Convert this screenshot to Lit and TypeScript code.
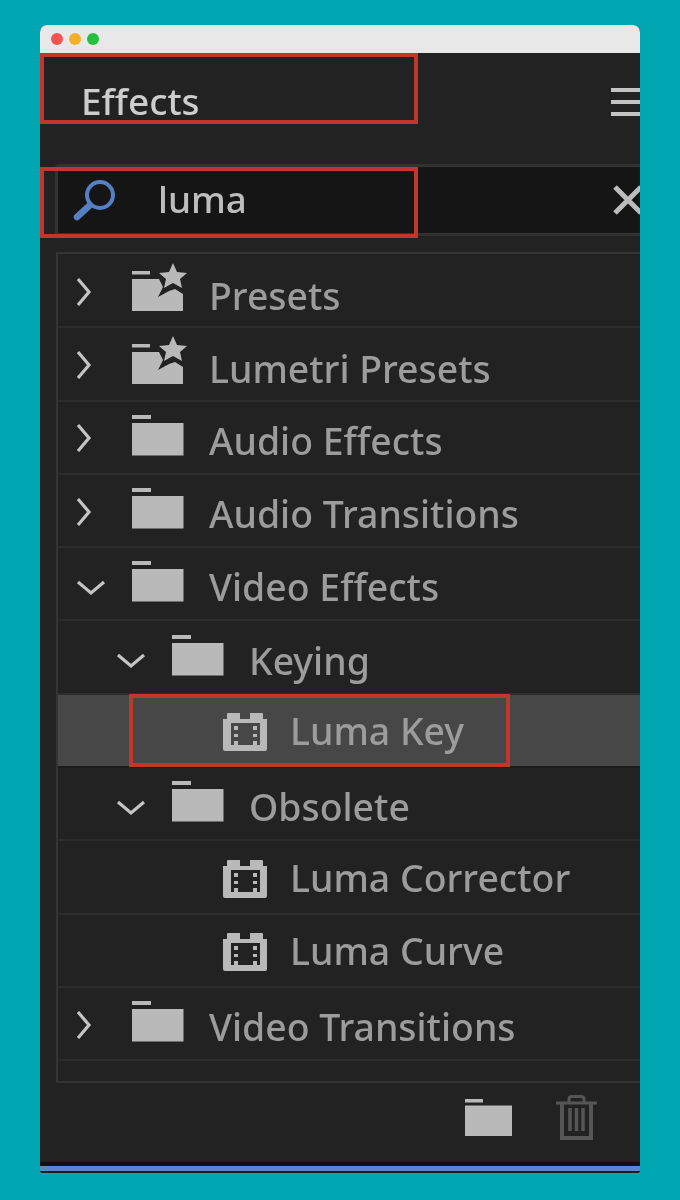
import { LitElement, css, html } from "lit";
import { customElement } from "lit/decorators.js";

type Kind = "folder" | "star" | "effect";
interface Row {
  label: string;
  depth: number;
  kind: Kind;
  open?: boolean;
  selected?: boolean;
}

const ROWS: Row[] = [
  { label: "Presets", depth: 0, kind: "star" },
  { label: "Lumetri Presets", depth: 0, kind: "star" },
  { label: "Audio Effects", depth: 0, kind: "folder" },
  { label: "Audio Transitions", depth: 0, kind: "folder" },
  { label: "Video Effects", depth: 0, kind: "folder", open: true },
  { label: "Keying", depth: 1, kind: "folder", open: true },
  { label: "Luma Key", depth: 2, kind: "effect", selected: true },
  { label: "Obsolete", depth: 1, kind: "folder", open: true },
  { label: "Luma Corrector", depth: 2, kind: "effect" },
  { label: "Luma Curve", depth: 2, kind: "effect" },
  { label: "Video Transitions", depth: 0, kind: "folder" },
];

const folderIcon = html`<svg class="folder plain" width="52" height="41" viewBox="0 0 52 41">
  <path d="M0 0h19v4H0zM0 8h51.500v32.500H0z" fill="#b9b9b9" />
</svg>`;

const starIcon = html`<svg class="folder star" width="56" height="48" viewBox="0 0 56 48">
  <path d="M0 8h18v3.500H0zM0 16h27l4 8-5 10 11-6 6-2 8 5v17H0z" fill="#b9b9b9" />
  <path d="M41 0l4 9 10 1-7 6 2 9-9-5-9 5 2-9-7-6 10-1z" fill="#b9b9b9" />
</svg>`;

const effectIcon = html`<svg class="effect" width="45" height="39" viewBox="0 0 45 39">
  <path
    fill="#b9b9b9"
    fill-rule="evenodd"
    d="M4 1q0-1 1-1h12v6h10V0h12q1 0 1 1v5h4v30q0 2-2 2H2q-2 0-2-2V6h4zM8 10v22h29V10z"
  />
  <path fill="#b9b9b9" d="M11 13h4v4h-4zM11 21h4v3h-4zM11 28h4v4h-4zM30 13h4v4h-4zM30 21h4v3h-4zM30 28h4v4h-4z" />
</svg>`;

@customElement("app-root")
export class AppRoot extends LitElement {
  static styles = css`
    :host {
      display: block;
      height: 1200px;
      box-sizing: border-box;
      padding: 25px 40px 0;
      background: #00a6b1;
      font-family: "Noto Sans", "Open Sans", sans-serif;
      font-weight: 500;
    }

    .window {
      height: 1148px;
      display: flex;
      flex-direction: column;
      overflow: hidden;
      border-radius: 7px 7px 3px 3px;
      background: #222222;
      filter: blur(0.5px);
    }

    .titlebar {
      flex: none;
      height: 28px;
      display: flex;
      align-items: center;
      gap: 6px;
      padding-left: 11px;
      background: #e8e8e8;
    }

    .dot {
      width: 12px;
      height: 12px;
      border-radius: 50%;
    }

    .header {
      flex: none;
      position: relative;
      height: 111px;
      box-sizing: border-box;
      display: flex;
      justify-content: space-between;
      padding: 23px 0 0 41px;
      color: #cdcdcd;
      font-size: 37px;
      line-height: 50px;
    }

    .menu {
      width: 29px;
      height: 28px;
      margin-top: 12px;
      display: flex;
      flex-direction: column;
      justify-content: space-between;
    }

    .menu i {
      height: 4px;
      background: #c4c4c4;
    }

    .redbox {
      position: absolute;
      box-sizing: border-box;
      border: 4px solid #c2362b;
      pointer-events: none;
    }

    .header .redbox {
      left: 0;
      top: 0;
      width: 378px;
      height: 71px;
    }

    .search {
      flex: none;
      position: relative;
      height: 72px;
      margin-left: 15px;
      box-sizing: border-box;
      display: flex;
      align-items: center;
      border-top: 3px solid #323232;
      border-bottom: 3px solid #323232;
      border-left: 3px solid #323232;
      border-radius: 4px 0 0 4px;
      background: #151515;
      color: #bdbdbd;
      font-size: 36.8px;
    }

    .search .glass {
      margin-left: 14px;
    }

    .search span {
      margin-left: 40px;
      flex: 1;
      position: relative;
      top: -1px;
    }

    .search .close {
      margin-right: -4px;
    }

    .search .redbox {
      left: -18px;
      top: 0;
      width: 378px;
      height: 71px;
    }

    .list {
      flex: none;
      margin: 16px 0 0 16px;
      height: 831px;
      box-sizing: border-box;
      padding-top: 1px;
      border: 2px solid #343434;
      border-right: 0;
    }

    .row {
      position: relative;
      height: 73.3px;
      box-sizing: border-box;
      display: flex;
      align-items: center;
      border-bottom: 2px solid #2d2d2d;
      color: #9c9c9c;
      font-size: 37.4px;
      white-space: nowrap;
    }

    .row.selected {
      background: #474747;
      border-bottom-color: #1c1c1c;
    }

    .row .redbox {
      left: 71px;
      top: -1px;
      width: 381px;
      height: 73px;
    }

    .chevron {
      flex: none;
      width: 30px;
      display: flex;
    }

    .chevron svg.right {
      margin-top: 2px;
    }

    .chevron svg.down {
      margin-top: 8px;
    }

    .spacer {
      flex: none;
    }

    .row svg.folder {
      flex: none;
      margin-right: 25px;
    }

    .row svg.folder.star {
      margin-right: 21px;
      margin-bottom: 8px;
    }

    .row svg.folder.plain {
      margin-bottom: 4px;
    }

    .row svg.effect {
      flex: none;
      margin-right: 22px;
      margin-top: 4px;
    }

    .row .label {
      position: relative;
      top: 3px;
    }

    .row svg.star + .label {
      top: 5px;
    }

    .row svg.effect + .label {
      top: 0;
    }

    .footer {
      flex: 1;
      display: flex;
      align-items: flex-start;
      gap: 44px;
      padding: 12px 43px 0 0;
      justify-content: flex-end;
    }

    .footer .newbin {
      margin-top: 4px;
    }

    .stripe {
      flex: none;
      height: 11px;
      box-sizing: border-box;
      background: #171c22;
      border-top: 4px solid #101010;
      border-bottom: 2px solid #171c22;
    }

    .stripe i {
      display: block;
      height: 5px;
      background: #5b86c8;
    }
  `;

  private renderChevron(row: Row) {
    if (row.kind === "effect") return null;
    return html`<div class="chevron">
      ${row.open
        ? html`<svg class="down" width="30" height="16" viewBox="0 0 30 16">
            <path d="M2 2l13 11L28 2" fill="none" stroke="#c4c4c4" stroke-width="3.200" />
          </svg>`
        : html`<svg class="right" width="16" height="30" viewBox="0 0 16 30">
            <path d="M2 2l11 13L2 28" fill="none" stroke="#c4c4c4" stroke-width="3.200" />
          </svg>`}
    </div>`;
  }

  private renderRow(row: Row) {
    // folders and effects start at different offsets, depth adds 40px a level
    const left = row.kind === "effect" ? 165 : 18 + row.depth * 40;
    const icon = row.kind === "star" ? starIcon : row.kind === "effect" ? effectIcon : folderIcon;
    return html`<div class="row ${row.selected ? "selected" : ""}" style="padding-left:${left}px">
      ${this.renderChevron(row)}
      <div class="spacer" style="width:${row.kind === "effect" ? 0 : 26}px"></div>
      ${icon}
      <span class="label">${row.label}</span>
      ${row.selected ? html`<div class="redbox"></div>` : null}
    </div>`;
  }

  render() {
    return html`
      <div class="window">
        <div class="titlebar">
          <div class="dot" style="background:#f45350"></div>
          <div class="dot" style="background:#f6b026"></div>
          <div class="dot" style="background:#27c03e"></div>
        </div>
        <div class="header">
          <span>Effects</span>
          <div class="menu"><i></i><i></i><i></i></div>
          <div class="redbox"></div>
        </div>
        <div class="search">
          <svg class="glass" width="46" height="44" viewBox="0 0 46 44">
            <circle cx="28" cy="17" r="13" fill="none" stroke="#5580c4" stroke-width="4" />
            <path d="M17 28L5 39" stroke="#5580c4" stroke-width="6.500" stroke-linecap="round" />
          </svg>
          <span>luma</span>
          <svg class="close" width="32" height="32" viewBox="0 0 32 32">
            <path d="M3 3l26 26M29 3L3 29" stroke="#bcbcbc" stroke-width="5" fill="none" />
          </svg>
          <div class="redbox"></div>
        </div>
        <div class="list">${ROWS.map((r) => this.renderRow(r))}</div>
        <div class="footer">
          <svg class="newbin" width="47" height="38" viewBox="0 0 47 38">
            <path d="M0 0h18v3.500H0zM0 6.500h47V37H0z" fill="#b9b9b9" />
          </svg>
          <svg width="41" height="46" viewBox="0 0 41 46" fill="none" stroke="#565656">
            <path d="M0 8h41" stroke-width="3" />
            <path d="M13 7V4q0-2.500 3-2.500h9q3 0 3 2.500v3" stroke-width="3" />
            <path d="M6 8v35h29V8" stroke-width="4" />
            <path d="M14 13v23M20.500 13v23M27 13v23" stroke-width="3.500" />
          </svg>
        </div>
        <div class="stripe"><i></i></div>
      </div>
    `;
  }
}
